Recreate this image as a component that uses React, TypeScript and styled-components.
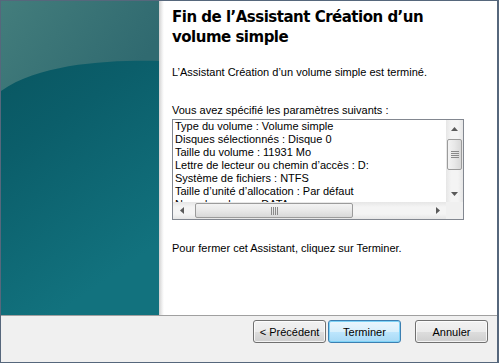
import React from 'react'
import styled, { createGlobalStyle } from 'styled-components'

const GlobalStyle = createGlobalStyle`
	html, body {
		margin: 0;
		padding: 0;
		background: #ffffff;
	}
	body {
		font-family: 'Liberation Sans', Arial, sans-serif;
		font-size: 11px;
		color: #000000;
	}
`

const summaryLines: string[] = [
	'Type du volume : Volume simple',
	'Disques sélectionnés : Disque 0',
	'Taille du volume : 11931 Mo',
	'Lettre de lecteur ou chemin d’accès : D:',
	'Système de fichiers : NTFS',
	'Taille d’unité d’allocation : Par défaut',
	'Nom de volume : DATA',
	'Formatage rapide : Oui',
]

const SidePanelArt: React.FC = () => (
	<svg width="158" height="314" viewBox="0 0 158 314" preserveAspectRatio="none">
		<defs>
			<linearGradient id="base" x1="0" y1="0" x2="0.35" y2="1">
				<stop offset="0" stopColor="#08525c" />
				<stop offset="0.45" stopColor="#0b5e6a" />
				<stop offset="1" stopColor="#12727e" />
			</linearGradient>
			<linearGradient id="gloss" x1="0" y1="0" x2="1" y2="0.4">
				<stop offset="0" stopColor="#437d7c" />
				<stop offset="1" stopColor="#306a70" />
			</linearGradient>
		</defs>
		<rect x="0" y="0" width="158" height="314" fill="url(#base)" />
		<path d="M0 0 H158 V60 C110 59 40 62 0 90 Z" fill="url(#gloss)" />
	</svg>
)

const ScrollArrow: React.FC<{ dir: 'up' | 'down' | 'left' | 'right' }> = ({ dir }) => {
	const points = {
		up: '0,4 7,4 3.5,0',
		down: '0,0 7,0 3.5,4',
		left: '4,0 4,7 0,3.5',
		right: '0,0 0,7 4,3.5',
	}[dir]
	const vertical = dir === 'up' || dir === 'down'
	return (
		<svg width={vertical ? 7 : 4} height={vertical ? 4 : 7}>
			<polygon points={points} fill="#5a5a5a" />
		</svg>
	)
}

const Grip: React.FC<{ vertical: boolean }> = ({ vertical }) => (
	<svg width={vertical ? 8 : 7} height={vertical ? 7 : 8}>
		{[0, 2, 4, 6].map(i =>
			vertical ? (
				<rect key={i} x="0" y={i} width="8" height="1" fill="#8a8a8a" />
			) : (
				<rect key={i} x={i} y="0" width="1" height="8" fill="#8a8a8a" />
			),
		)}
	</svg>
)

export default function App() {
	return (
		<>
			<GlobalStyle />
			<Window>
				<Main>
					<SidePanel>
						<SidePanelArt />
					</SidePanel>
					<Shadow />
					<Content>
						<Title>Fin de l’Assistant Création d’un volume simple</Title>
						<Paragraph top={19}>
							L’Assistant Création d’un volume simple est terminé.
						</Paragraph>
						<Paragraph top={25}>Vous avez spécifié les paramètres suivants :</Paragraph>
						<ListBox>
							<ListArea>
								<ListText>
									{summaryLines.map(line => (
										<Line key={line}>{line}</Line>
									))}
								</ListText>
								<VScroll>
									<ArrowButton>
										<ScrollArrow dir="up" />
									</ArrowButton>
									<VTrack>
										<VThumb>
											<Grip vertical />
										</VThumb>
									</VTrack>
									<ArrowButton>
										<ScrollArrow dir="down" />
									</ArrowButton>
								</VScroll>
							</ListArea>
							<BottomRow>
								<HScroll>
									<ArrowButton>
										<ScrollArrow dir="left" />
									</ArrowButton>
									<HTrack>
										<HThumb>
											<Grip vertical={false} />
										</HThumb>
									</HTrack>
									<ArrowButton>
										<ScrollArrow dir="right" />
									</ArrowButton>
								</HScroll>
								<Corner />
							</BottomRow>
						</ListBox>
						<Paragraph top={22}>Pour fermer cet Assistant, cliquez sur Terminer.</Paragraph>
					</Content>
				</Main>
				<Footer>
					<Button>&lt; Précédent</Button>
					<Button primary>Terminer</Button>
					<Button gapBefore={12}>Annuler</Button>
				</Footer>
			</Window>
		</>
	)
}

const Window = styled.div`
	width: 499px;
	height: 363px;
	box-sizing: border-box;
	border: 1px solid #56677c;
	border-right-width: 2px;
	display: flex;
	flex-direction: column;
	background: #ffffff;
	overflow: hidden;
`

const Main = styled.div`
	height: 314px;
	display: flex;
	flex-shrink: 0;
`

const SidePanel = styled.div`
	width: 158px;
	height: 314px;
	flex-shrink: 0;
	svg {
		display: block;
	}
`

const Shadow = styled.div`
	width: 5px;
	flex-shrink: 0;
	background: linear-gradient(to right, #cfcfcf, #e6e6e6 40%, #f6f6f6 75%, #ffffff);
`

const Content = styled.div`
	flex: 1;
	padding: 6px 0 0 8px;
	display: flex;
	flex-direction: column;
	align-items: flex-start;
`

const Title = styled.h1`
	margin: 0;
	width: 300px;
	font-family: 'DejaVu Sans', Verdana, sans-serif;
	font-weight: bold;
	font-size: 15px;
	line-height: 20px;
	letter-spacing: -0.5px;
`

const Paragraph = styled.p<{ top: number }>`
	margin: ${props => props.top}px 0 0 0;
	line-height: 13px;
`

const ListBox = styled.div`
	margin-top: 2px;
	width: 292px;
	height: 101px;
	box-sizing: border-box;
	border: 1px solid #828790;
	display: flex;
	flex-direction: column;
	background: #ffffff;
`

const ListArea = styled.div`
	flex: 1;
	display: flex;
	min-height: 0;
`

const ListText = styled.div`
	flex: 1;
	overflow: hidden;
	padding: 0 0 0 2px;
`

const Line = styled.div`
	line-height: 13px;
	white-space: nowrap;
`

const VScroll = styled.div`
	width: 17px;
	display: flex;
	flex-direction: column;
	background: linear-gradient(to right, #e6e6e6, #f4f4f4 30%, #f4f4f4 70%, #e6e6e6);
`

const ArrowButton = styled.div`
	width: 17px;
	height: 17px;
	flex-shrink: 0;
	display: flex;
	align-items: center;
	justify-content: center;
`

const VTrack = styled.div`
	flex: 1;
	padding: 2px 0 0 0;
`

const VThumb = styled.div`
	margin: 0 1px;
	height: 31px;
	box-sizing: border-box;
	border: 1px solid #9b9b9b;
	border-radius: 2px;
	background: linear-gradient(to right, #f3f3f3, #e8e8e8 50%, #d8d8d8);
	display: flex;
	align-items: center;
	justify-content: center;
`

const BottomRow = styled.div`
	height: 17px;
	display: flex;
	flex-shrink: 0;
`

const HScroll = styled.div`
	flex: 1;
	display: flex;
	background: linear-gradient(to bottom, #e6e6e6, #f4f4f4 30%, #f4f4f4 70%, #e6e6e6);
`

const HTrack = styled.div`
	flex: 1;
	padding-left: 5px;
`

const HThumb = styled.div`
	margin: 1px 0;
	width: 158px;
	height: 15px;
	box-sizing: border-box;
	border: 1px solid #9b9b9b;
	border-radius: 2px;
	background: linear-gradient(to bottom, #f3f3f3, #e8e8e8 50%, #d8d8d8);
	display: flex;
	align-items: center;
	justify-content: center;
`

const Corner = styled.div`
	width: 17px;
	background: #f0f0f0;
`

const Footer = styled.div`
	flex: 1;
	border-top: 1px solid #a0a0a0;
	background: #f0f0f0;
	display: flex;
	justify-content: flex-end;
	align-items: flex-start;
	gap: 2px;
	padding: 4px 9px 0 0;
`

const Button = styled.button<{ primary?: boolean; gapBefore?: number }>`
	width: 73px;
	height: 23px;
	margin-left: ${props => props.gapBefore ?? 0}px;
	padding: 0;
	font-family: 'Liberation Sans', Arial, sans-serif;
	font-size: 11px;
	color: #000000;
	border-radius: 3px;
	border: 1px solid ${props => (props.primary ? '#3c7fb1' : '#707070')};
	background: ${props =>
		props.primary
			? 'linear-gradient(to bottom, #eaf6fd 0%, #d9f0fc 50%, #bee6fd 51%, #a7d9f5 100%)'
			: 'linear-gradient(to bottom, #f2f2f2 0%, #ebebeb 50%, #dddddd 51%, #cfcfcf 100%)'};
	box-shadow: inset 0 0 0 1px
		${props => (props.primary ? '#7fd3f7' : 'rgba(255, 255, 255, 0.75)')};
`
